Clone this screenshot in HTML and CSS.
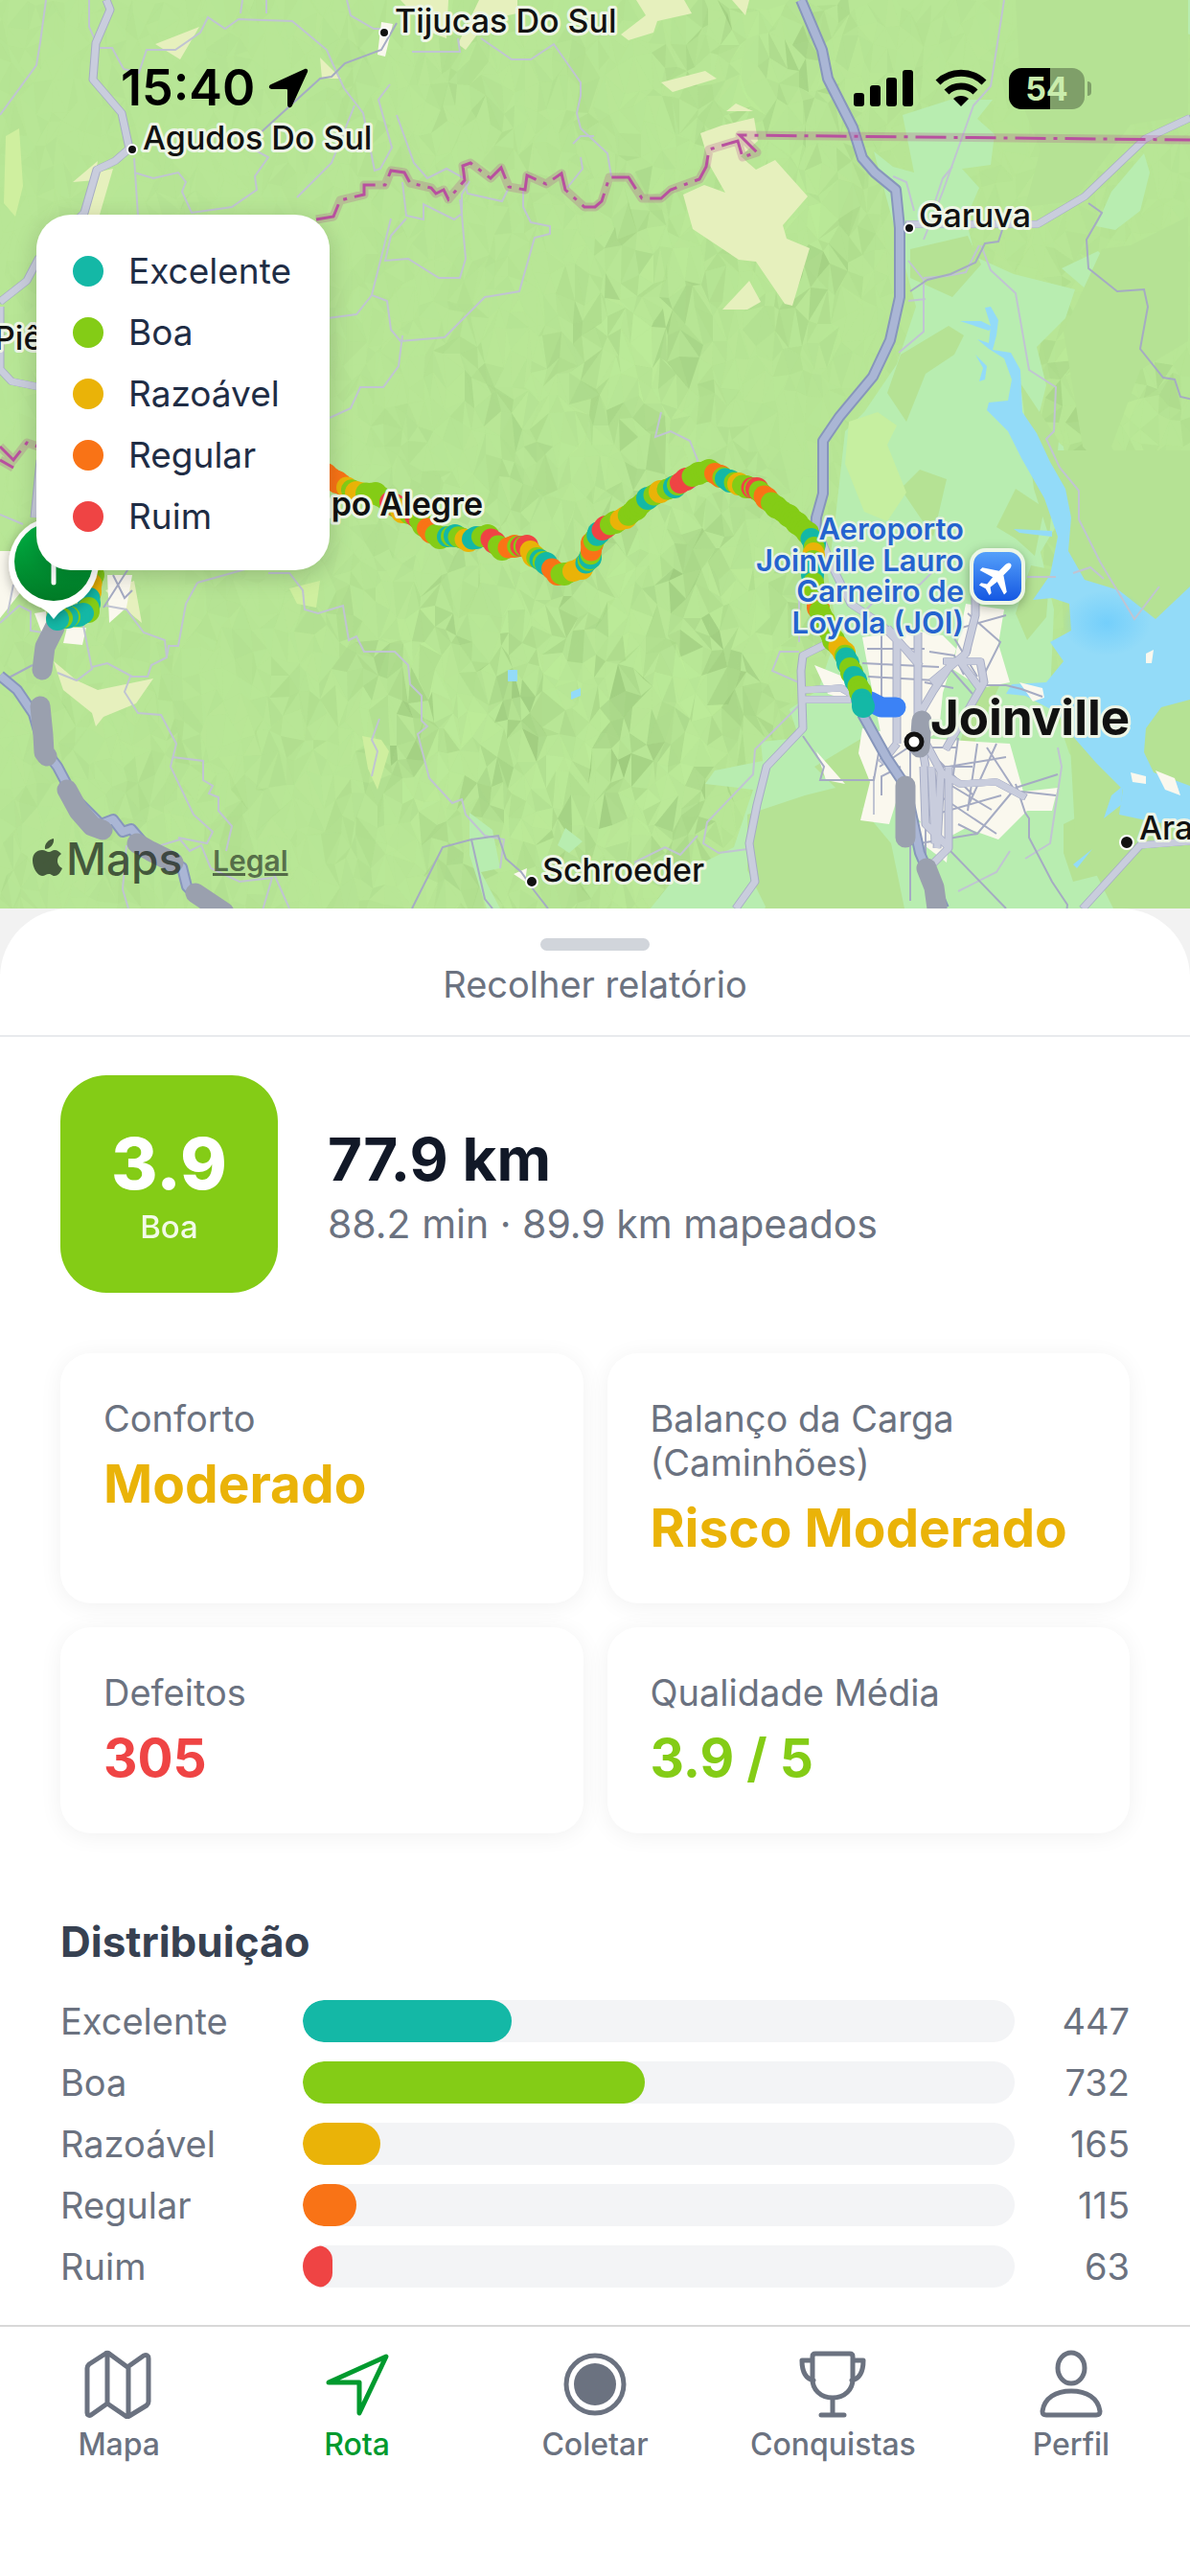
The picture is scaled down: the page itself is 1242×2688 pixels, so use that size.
FILE: index.html
```html
<!DOCTYPE html>
<html lang="pt-BR">
<head>
  <meta charset="UTF-8">
  <meta name="viewport" content="width=device-width, initial-scale=1.0">
  <title>Rota</title>
  <link rel="stylesheet" href="styles.css">
</head>
<body>

  <section class="map">
    <svg class="map-canvas" viewBox="0 0 1242 948" preserveAspectRatio="xMidYMin slice" role="img" aria-label="Mapa da rota">
      <defs>
        <linearGradient id="pinFill" x1="0" y1="0" x2="0" y2="1">
          <stop offset="0" stop-color="#00b445"/>
          <stop offset="1" stop-color="#007a26"/>
        </linearGradient>
        <linearGradient id="airFill" x1="0" y1="0" x2="0" y2="1">
          <stop offset="0" stop-color="#55a0fa"/>
          <stop offset="1" stop-color="#1558e2"/>
        </linearGradient>
        <radialGradient id="bay">
          <stop offset="0" stop-color="#74cffb"/>
          <stop offset="1" stop-color="#74cffb" stop-opacity="0"/>
        </radialGradient>
        <filter id="shadow" x="-30%" y="-30%" width="160%" height="160%">
          <feDropShadow dx="0" dy="3" stdDeviation="6" flood-opacity=".3"/>
        </filter>
      </defs>

      <rect width="1242" height="948" fill="#b8e696"/>
      <g id="relief"></g>

      <!-- Planície -->
      <g fill="#b8edb0">
        <path d="M912 158l20 16 22 6-12-60 50-16h44l-16 20 18 16-4 32-30 4 18 20-14 32 10 40 40 18 64 16-10 30-30 30 10 40-10 40 28 24 6 60-30 50 14 60-4 90 20 60 50 60-10 60 40 22v120H846l-6-30 20-60-14-30-46 16-60 120h-40l-30-20 10-60-14-20 40-50 60-30 20-60-50-6 10-14 50-10-2-20 40-4-10-30 30-20 20-60-10-60 8-60 10-90 20-20 34-50 20-60z"/>
        <path d="M1184 30l10-30h48v36l-30-8zM1062 0l34 2 2 24-20-10zM1160 200l34-40 6 20-10 40-26 20-20-4zM1108 280l38-18 20 20-30 22zM1180 360l20-34 40-10-4 24-40 26zM490 848l24 18 8 40-20 4 20 38h-14l-18-56zM590 864l18 14-14 12-12-8z"/>
      </g>
      <g fill="#b5e294">
        <path d="M950 260l60-14 14 30-30 34-44-20zM1060 0h180v120l-60 10-60 80-50 6 16-60-20-50zM1150 260l30-4 60-30v130l-50 30-30 80 30 60-60-60-20-120zM940 370l50-30 16 10-10 20-30 20-20 50-20-30zM1065 400l40 60-10 100-16-50zM1040 550l20-40 30 20-10 50-20-18zM1060 640l16-50 20 4-4 50-20 24zM940 510l20-20 28 10-14 60z"/>
        <path d="M780 850l60-20 40-10 50 60 14 68H800l-20-40zM1110 860l40-20 20 30-10 40-40 10-10-30zM1050 700l-30 20-20 60 10 10zM850 800l50-30 20 30-10 50-30-20z"/>
      </g>
      <path d="M886 440l30-10 20 14-10 20 20 50-20 30-24-10-20-50z" fill="#c6efa0"/>
      <path d="M1100 470h142v478h-80l-40-80z" fill="#b5e294"/>

      <!-- Água -->
      <path d="M1028 321L1034 320 1042 334 1040 350 1036 365 1055 368 1065 386 1067 430 1082 452 1096 482 1112 510 1118 540 1115 575 1132 605 1168 616 1206 646 1242 612V730L1212 738 1196 760 1194 785 1204 806 1242 820V864L1196 856 1168 850 1172 824 1144 796 1116 764 1104 744 1070 726 1050 724 1056 714 1092 712 1110 690 1096 670 1118 658 1116 630 1098 624 1078 626 1096 600 1104 560 1090 520 1066 478 1052 450 1030 428 1032 420 1052 418 1056 396 1048 374 1032 364 1020 354 1032 358 1034 340z" fill="#93dbf8"/>
      <ellipse cx="1155" cy="650" rx="46" ry="34" fill="url(#bay)"/>
      <path d="M1002 335h22l12 6-4 4zM1018 370l12 12-2 14-6 2 4-14zM1058 552l40 2v6l-34-4zM1172 820l-12 10-8 24 18-14zM1140 886l-20 16 4 4zM530 699h10v12h-10zM596 722l10-4v8l-10 4z" fill="#93dbf8"/>
      <path d="M1196 682l8-4-2 14h-6zM1180 806l16 4v8l-14-2zM1206 804l20 8 6 18-16-6z" fill="#faf8ee"/>

      <!-- Campos e áreas urbanas -->
      <g fill="#e6f0bd">
        <path d="M731 139l22-8 34-8 4 24-18 16 16 14 20-10 34 38-26 30 4 14 24 10-18 60-8-2-30-44-18-2-48-32-10-36 22-10 22 8-16-28z"/>
        <path d="M754 323l28-30 12 22-14 8zM690 86l46-12 12 8-46 14zM758 116l10-8 18 8zM664 0h50l8 14-36 8-4 12-26 8-8-6 26-20zM764 0h18l-4 16zM162 46l46-18-20 34zM334 60l22 22h-20zM418 0h50l-2 40-16-6zM500 0h40v14l-30 6-24 32-8-6zM76 190l26-22-2 12 18-4-14 48h-12l8-36zM110 616l30-10 8 44-24-20zM56 690l24 20 22 10 58-12-18 26-34 14-8 10-4-14-30-24z"/>
      </g>
      <path d="M6 142l14-8 4 60-8 32-12-14zM378 768l20 4 8 12-12 40-10-22zM302 614l32-8-4 28-20-4z" fill="#cfef9f"/>
      <g fill="#faf8ee">
        <path d="M900 665l50-8 34 6 14 14-14 46-4 40-30 20-30-14-10-50zM1008 630l40 6-6 36 12 40-30 6-30-20zM900 760l60 10 60 4 34 2 14 50 36-4-6 24-26 0-30 30-34-12-30 16-40-52-10 32-30-4 10-40-12-30zM850 694l40 16 4 24-30-10zM852 784l30 34-20-4zM1064 712l24 6 2 10-12 4zM936 860l56-4-4 44z"/>
        <path d="M112 600l26 0-6 34-18 16zM70 655l20 0-4 18-20-2zM398 23l12 2-8 34-8-2zM536 912l14-6-2 14zM0 575l16 0 8 40-24 30zM36 640l12-2 0 34z"/>
      </g>

      <!-- Estradas menores -->
      <g class="road-thin">
        <path d="M48 0l-6 44-4 24-38 52M93 0v28l10 22 14 0 12 22 16 4 8-24 30 0 26-18 8-16 18 12 14-10 56 2 36 30 6 14 12 26 20 26 12 60 6-2 12-22-14-50 12-16M253 0l-2 14M278 0v14M362 0l4 16 24 14h14M140 165l4 60M140 180l20 6 26-6 8 10-4 10 10 22 42-6 26-18-2-14 14-20-26-14M370 110l-24 60-36 36M414 120l18 50 14 16 20-10 18 10 4 16 36 8 6-12M420 190l4 35 18 4 0-16 32 16 8-6 0-20 8-14M424 228l-16 18-6 26 24-2 32 20h22l6-20-4-46-2-16M546 196l0 20 8 16 20 4v8l-16 4-16 56-36 6-42 42-46 4-10-12-4-30-16-6 20-80M420 350l-4 32-16 22-24 0-10 22-22 10M388 308l-16 20-30 4"/>
        <path d="M502 40l32 22h20l24-16 28 40 0 14-4 18 4 16 28 26 4 24M598 150l8-8 14 0M606 164l2 12-16 20M430 54l50 0-2-14M1048 0l-14 90-18 20-32 90-20 50M932 184l14 6 8 30M994 174l-10 12-8 24M948 272l16 20v54l-26 22M948 314l18-2M1022 256l-14 28-20 4-24 2M1024 256l10 26 26 24 14 80 28 18-2 46-8 8 14 30 20 24 0 30 22 44 36 60 26-34M690 430l-6 26 16-6 20 10 8 20-4 30M1120 598l18-6 14 12"/>
        <path d="M206 608l50-14 30-10M206 608l-12 22-8 44h-10l-2 12-16 8-4 12h-18l-6 16 14 22 24 2 16 30-6 24 24 50 20 18-6 12-30-6M180 790l32 4 0 20 10 6-4 8 10 4 0 14 14 16-6 26M110 632l22 4 18 24 22 8 2 18M60 702l20 8 16-12-10-50M96 696l16-4 26 14M280 598l22 0 14 18 2 20 14 4 26-8 6 36 8-4 8 16h32l14 14 2 20 12 12 0 26 6 6-10 8 12 46 24 26 10-4 4 16 20 22 20 4-4 30M132 882l-4 46 6 20M396 750l-8 22 6 12-6 26M168 882l20-6 10 12 12-6 10 24 30 14 34-4-10 34M286 912l16 36"/>
        <path d="M0 537l24 10M0 650l20-18 12 6 0 20 12 2M8 640l6-30M834 670v-60M834 680l-20 0-8 20 32 14M838 732l-50 50-2 26-48 50-4 22 16 10 30-4M728 872l-18 20-16-8-32 16M1072 602h30M900 640l20-20 40-10 30-30M1104 780l4 20-12 80-26 16M912 850l0-40M1000 930l40-20 14-22"/>
      </g>
      <g class="road-mid">
        <path d="M414 24l-16 28-38 14-14 14-12 2-66 60M1046 240l-4 12-14 2-10 20-26 12-24 6-18 12M1136 212l14 10-16 28 2 30 30 24 28-2 4 18-8 44 24 30 12 2 6 18 18 4M430 948l32-64 30-8 14 62 8 10M492 876l28-4 8 24 16 14 14 20 14 18M108 634l32-50M0 712l34-18M118 600l12 24 8-8M838 768l22 32-4 14h56l6-34M1060 818l10 30 4 6 0 20 24 46 16 24-2 20M1030 715l20 0 16 4 22 8M990 886l60 62"/>
        <path d="M905 677l60 0M900 692l80 4M906 706l70 4M920 660v70M936 662v60M960 690v70M970 680l26 4 10 20M990 656l30 50M1010 640l34 30-20 40M1018 632l-6 50M1000 656l50-14M985 690l30 34M965 712l30 6M918 800l30-20 50 0M966 780l50 50M1000 770l-12 90M975 800l40 0M1020 776l-10 70M1040 776l-30 66M1050 790l-60 10M980 830l60 40M975 850l70-20M960 880l60-10 40-48M1000 860l20 10M966 900v-100M1060 822l44-14M1066 826l36 4M940 800l-20 10 0 20M950 780v160M1030 780l30 46M985 815l50 30"/>
      </g>

      <!-- Rodovias -->
      <g class="road-major">
        <path d="M111 0l4 10-15 35-3 38 30 35 8 37-15 13-19 9-13 45-48 48-12 23-28 22M0 320v65l12 13 50 10M36 540l6-60M946 234h137l49-29 63-60 47-22M866 670l-28 14-2 16 2 60-38 40-10 40-8 40 6 40-20 28M1242 878l-52 4-60 66"/>
        <path d="M838 720l40-2 14 8M838 730h50M936 656v120M958 660l0 90 8 50M958 690l-40-40-30-20-20-40-12-30M972 712l36-30 10-40 0-50M985 690l16 0 22 0 4 22-40 70M966 775l16 30-4 80M982 806l20 12 38-2 30 16M964 800l2 60 24 24M972 800l4 80M936 776l-16 20M960 745l14-24 20-30M990 800l0 85-20 20M926 655l34 40M1002 690l22 30"/>
      </g>
      <g class="road-trunk-case">
        <path d="M836 0l22 52 6 30 26 51 10 32 13 15 22 18 4 40 0 72-10 45-18 38-35 42-17 25 0 55-7 25-3 60M900 745l25 45 20 30 15 70 15 35 10 23M0 705l18 15 17 25 10 35 15 20 8 15 7 15 30 30 13-5 10 13 9-3 13 15 40 25 5 20 20 20"/>
      </g>
      <g class="road-trunk">
        <path d="M836 0l22 52 6 30 26 51 10 32 13 15 22 18 4 40 0 72-10 45-18 38-35 42-17 25 0 55-7 25-3 60M900 745l25 45 20 30 15 70 15 35 10 23M0 705l18 15 17 25 10 35 15 20 8 15 7 15 30 30 13-5 10 13 9-3 13 15 40 25 5 20 20 20"/>
      </g>

      <!-- Divisa estadual -->
      <path class="border-glow" d="M330 229l18-3 7-17 25-6v-10h22l6-15 14 2 6 11 22 5 5 6 8-4 5 10 17-20-2-15 8-3 21 16 11-11 8 20 17 3 2-15 20 9 16-11 4 17 20 18h11l7-6 8-25h20l14 22h20l10-9 30-11 7-13 3-18 30-9 5 17 15-5-18-18 470 5M0 466l14 14 14-18 12 4M0 480l14 8"/>
      <path class="border-line" d="M330 229l18-3 7-17 25-6v-10h22l6-15 14 2 6 11 22 5 5 6 8-4 5 10 17-20-2-15 8-3 21 16 11-11 8 20 17 3 2-15 20 9 16-11 4 17 20 18h11l7-6 8-25h20l14 22h20l10-9 30-11 7-13 3-18 30-9 5 17 15-5-18-18 470 5M0 466l14 14 14-18 12 4M0 480l14 8"/>

      <!-- Trechos sem dados -->
      <path class="no-data" d="M57 655l-10 20-3 24M42 737l3 30 1 18 3 4M70 824l12 22 14 16 11 4M143 880l14 8 24 12M204 932l30 20M962 752l-2 28M945 820v54M967 906l8 20 3 22"/>
      <path d="M908 732l12 6h15" class="pending"/>

      <g id="route"></g>

      <!-- Cidades -->
      <g class="town-dot">
        <circle cx="401" cy="34" r="5"/>
        <circle cx="138" cy="156" r="5"/>
        <circle cx="949" cy="238" r="5"/>
        <circle cx="555" cy="920" r="6"/>
        <circle cx="1176" cy="879" r="7"/>
      </g>
      <circle cx="954" cy="774" r="8" fill="#fff" stroke="#111" stroke-width="5"/>
      <g class="town">
        <text x="412" y="34">Tijucas Do Sul</text>
        <text x="149" y="156">Agudos Do Sul</text>
        <text x="959" y="237">Garuva</text>
        <text x="-6" y="365">Piên</text>
        <text x="566" y="920">Schroeder</text>
        <text x="1189" y="876">Araquari</text>
        <text class="town-bold" x="504" y="538" text-anchor="end">Campo Alegre</text>
        <text class="city" x="971" y="767">Joinville</text>
      </g>
      <g class="airport" text-anchor="end">
        <text x="1006" y="563">Aeroporto</text>
        <text x="1006" y="596">Joinville Lauro</text>
        <text x="1006" y="628">Carneiro de</text>
        <text x="1006" y="661">Loyola (JOI)</text>
      </g>
      <g filter="url(#shadow)">
        <rect x="1012" y="572" width="58" height="59" rx="17" fill="#edf6e6"/>
      </g>
      <rect x="1016" y="576" width="50" height="51" rx="13" fill="url(#airFill)"/>
      <path transform="translate(1041 602) rotate(45) scale(1.5)" fill="#fff" d="M0-13c1.500 0 2.200 1.800 2.200 3.800v5.400L12 2.800v2.600L2.200 2.400 1.600 8.600 5 11v2L0 11.600-5 13v-2l3.400-2.400-.6-6.200L-12 5.400V2.800l9.800-6.600v-5.400C-2.200-11.200-1.500-13 0-13z"/>

      <!-- Início da rota -->
      <g filter="url(#shadow)">
        <path d="M56 540a48 48 0 0 1 18 92c-8 3-12 6-18 14-6-8-10-11-18-14a48 48 0 0 1 18-92z" fill="#fff"/>
      </g>
      <circle cx="56" cy="586" r="41" fill="url(#pinFill)"/>
      <path d="M56 570v38" stroke="#fff" stroke-width="5" stroke-linecap="round"/>

      <g class="credit">
        <path d="M56 875c1 6-4 11-9 11-1-6 4-10 9-11zM57 887c3 0 5 2 7 4-6 4-5 12 1 15-2 5-5 8-8 8s-3-2-6-2-4 2-7 2c-5 0-10-9-10-16s4-11 10-11c3 0 5 2 7 2s4-2 6-2z"/>
        <text class="credit-name" x="69" y="913">Maps</text>
        <text class="credit-legal" x="222" y="909">Legal</text>
      </g>
    </svg>

    <div class="status-bar">
      <div class="status-left">
        <span class="clock">15:40</span>
        <svg width="42" height="42" viewBox="0 0 42 42" aria-hidden="true"><path d="M38 1c2-1 4 1 3 3L25 39c-1 3-5 3-5-1V23c0-1-1-1-1-1H4c-4 0-4-4-1-5z"/></svg>
      </div>
      <div class="status-right">
        <svg width="62" height="40" viewBox="0 0 62 40" aria-hidden="true">
          <rect y="25" width="11" height="14" rx="3"/>
          <rect x="17" y="17" width="11" height="22" rx="3"/>
          <rect x="34" y="9" width="11" height="30" rx="3"/>
          <rect x="51" y="1" width="11" height="38" rx="3"/>
        </svg>
        <svg width="54" height="40" viewBox="0 0 54 40" aria-hidden="true">
          <path d="M27 39l-8-8c4-4 12-4 16 0z"/>
          <path d="M12 24c8-8 22-8 30 0M3 14c13-13 35-13 48 0" fill="none" stroke="#000" stroke-width="7"/>
        </svg>
        <div class="battery"><span>54</span></div>
      </div>
    </div>

    <ul class="legend">
      <li><i class="dot excelente"></i>Excelente</li>
      <li><i class="dot boa"></i>Boa</li>
      <li><i class="dot razoavel"></i>Razoável</li>
      <li><i class="dot regular"></i>Regular</li>
      <li><i class="dot ruim"></i>Ruim</li>
    </ul>
  </section>

  <main class="sheet">
    <button class="sheet-toggle" type="button">
      <span class="handle"></span>
      Recolher relatório
    </button>

    <div class="report">
      <div class="summary">
        <div class="score">
          <strong>3.9</strong>
          <span>Boa</span>
        </div>
        <div class="trip">
          <h1>77.9 km</h1>
          <p>88.2 min · 89.9 km mapeados</p>
        </div>
      </div>

      <div class="cards">
        <div class="card">
          <p>Conforto</p>
          <strong class="text-razoavel">Moderado</strong>
        </div>
        <div class="card">
          <p>Balanço da Carga (Caminhões)</p>
          <strong class="text-razoavel">Risco Moderado</strong>
        </div>
        <div class="card">
          <p>Defeitos</p>
          <strong class="text-ruim">305</strong>
        </div>
        <div class="card">
          <p>Qualidade Média</p>
          <strong class="text-boa">3.9 / 5</strong>
        </div>
      </div>

      <h2>Distribuição</h2>
      <div class="distribution">
        <div class="row"><span>Excelente</span><div class="track"><div class="fill excelente" style="width: 29.37%"></div></div><b>447</b></div>
        <div class="row"><span>Boa</span><div class="track"><div class="fill boa" style="width: 48.09%"></div></div><b>732</b></div>
        <div class="row"><span>Razoável</span><div class="track"><div class="fill razoavel" style="width: 10.84%"></div></div><b>165</b></div>
        <div class="row"><span>Regular</span><div class="track"><div class="fill regular" style="width: 7.56%"></div></div><b>115</b></div>
        <div class="row"><span>Ruim</span><div class="track"><div class="fill ruim" style="width: 4.14%"></div></div><b>63</b></div>
      </div>
    </div>
  </main>

  <nav class="tabbar">
    <a href="#mapa">
      <svg viewBox="0 0 72 72" aria-hidden="true"><path d="M3 19c0-2 1-3 2-4L22 4c1-1 3-1 4 0l19 14 17-12c3-1 5 0 5 3v45c0 2-1 3-2 4L47 69c-1 1-3 1-4 0L24 56 7 68c-2 1-4 0-4-2zM24 4v52M46 18v51"/></svg>
      Mapa
    </a>
    <a href="#rota" class="active">
      <svg viewBox="0 0 72 72" aria-hidden="true"><path d="M66 7L38 66V34H6z"/></svg>
      Rota
    </a>
    <a href="#coletar">
      <svg viewBox="0 0 72 72" aria-hidden="true"><circle cx="36" cy="36" r="30"/><circle cx="36" cy="36" r="22" class="solid"/></svg>
      Coletar
    </a>
    <a href="#conquistas">
      <svg viewBox="0 0 72 72" aria-hidden="true"><path d="M18 4h36c2 0 3 1 3 3v24c0 10-8 19-21 19S15 41 15 31V7c0-2 1-3 3-3zM15 11H4c0 12 4 19 12 21M57 11h11c0 12-4 19-12 21M36 50v18M24 68h24"/></svg>
      Conquistas
    </a>
    <a href="#perfil">
      <svg viewBox="0 0 72 72" aria-hidden="true"><ellipse cx="36" cy="19" rx="14" ry="16"/><path d="M10 68c-3 0-4-1-4-4 2-14 14-21 30-21s28 7 30 21c0 3-1 4-4 4z"/></svg>
      Perfil
    </a>
  </nav>

  <script src="map.js"></script>
</body>
</html>
```

FILE: styles.css
```css
* {
  box-sizing: border-box;
}

body {
  margin: 0;
  height: 100vh;
  display: flex;
  flex-direction: column;
  font-family: Inter, "Liberation Sans", sans-serif;
  background-color: #f2f2f2;
  color: #6b7280;
}

h1, h2, p, ul {
  margin: 0;
  padding: 0;
}

/* Mapa */
.map {
  position: relative;
  flex: none;
  height: 948px;
  overflow: hidden;
}

.map-canvas {
  display: block;
  width: 100%;
  height: 100%;
}

.road-thin,
.road-mid {
  fill: none;
  stroke: #c0c4d2;
  stroke-width: 2;
}

.road-mid {
  stroke: #a5abc3;
}

.road-major {
  fill: none;
  stroke: #c9cddd;
  stroke-width: 7;
  stroke-linejoin: round;
  filter: drop-shadow(1px 0 0 #a5abc4) drop-shadow(-1px 0 0 #a5abc4);
}

.road-trunk-case,
.road-trunk {
  fill: none;
  stroke: #8796bb;
  stroke-width: 12;
  stroke-linejoin: round;
}

.road-trunk {
  stroke: #aab6d5;
  stroke-width: 8;
}

.border-glow {
  fill: none;
  stroke: #b0508f;
  stroke-opacity: 0.25;
  stroke-width: 9;
  stroke-linejoin: round;
}

.border-line {
  fill: none;
  stroke: #b8509f;
  stroke-width: 3;
  stroke-dasharray: 32 8 4 8;
}

.no-data,
.pending {
  fill: none;
  stroke: #9aa0ae;
  stroke-width: 21;
  stroke-linecap: round;
  stroke-linejoin: round;
}

.pending {
  stroke: #3b82f6;
}

.town-dot {
  fill: #111;
  stroke: #fff;
  stroke-width: 2;
}

.town {
  font-size: 34px;
  font-weight: 500;
  fill: #111;
  stroke: #eef6e6;
  stroke-width: 6px;
  stroke-linejoin: round;
  paint-order: stroke;
}

.town-bold {
  font-weight: 600;
}

.city {
  font-size: 51px;
  font-weight: 700;
}

.airport {
  font-size: 31px;
  font-weight: 600;
  fill: #2463cf;
  stroke: #e6f3e4;
  stroke-width: 5px;
  stroke-linejoin: round;
  paint-order: stroke;
}

.credit {
  fill: #1e2a1e;
  fill-opacity: 0.75;
}

.credit-name {
  font-size: 46px;
  font-weight: 500;
}

.credit-legal {
  font-size: 30px;
  font-weight: 600;
  fill-opacity: 0.65;
  text-decoration: underline;
}

/* Barra de status sobre o mapa */
.status-bar {
  position: absolute;
  top: 60px;
  left: 0;
  right: 0;
  padding: 0 104px 0 126px;
  display: flex;
  justify-content: space-between;
  align-items: center;
  color: #000;
}

.status-left,
.status-right {
  display: flex;
  align-items: center;
  gap: 14px;
}

.status-right {
  gap: 23px;
}

.clock {
  font-size: 52px;
  font-weight: 600;
  line-height: 64px;
}

.battery {
  position: relative;
  width: 79px;
  height: 43px;
  border-radius: 13px;
  background: linear-gradient(90deg, #000 54%, #7f9f69 54%);
  color: #c9ecac;
  font-size: 34px;
  font-weight: 700;
  line-height: 43px;
  text-align: center;
  margin-right: 6px;
}

.battery::after {
  content: "";
  position: absolute;
  right: -7px;
  top: 14px;
  width: 4px;
  height: 15px;
  border-radius: 0 4px 4px 0;
  background-color: #7f9f69;
}

.legend {
  position: absolute;
  top: 224px;
  left: 38px;
  padding: 36px 40px 34px 38px;
  border-radius: 36px;
  background-color: #fff;
  box-shadow: 0 6px 24px rgba(0, 0, 0, 0.18);
  list-style: none;
  font-size: 37px;
  line-height: 45px;
  color: #1f2d45;
}

.legend li {
  display: flex;
  align-items: center;
  gap: 26px;
}

.legend li + li {
  margin-top: 19px;
}

.dot {
  width: 32px;
  height: 32px;
  border-radius: 50%;
}

.excelente { background-color: #14b8a6; }
.boa { background-color: #84cc16; }
.razoavel { background-color: #eab308; }
.regular { background-color: #f97316; }
.ruim { background-color: #ef4444; }

.text-boa { color: #84cc16; }
.text-razoavel { color: #eab308; }
.text-ruim { color: #ef4444; }

/* Relatório */
.sheet {
  flex: 1;
  min-height: 0;
  overflow: hidden;
  border-radius: 72px 72px 0 0;
  background-color: #fff;
}

.sheet-toggle {
  display: flex;
  flex-direction: column;
  align-items: center;
  gap: 12px;
  width: 100%;
  padding: 31px 0 30px;
  border: 0;
  border-bottom: 2px solid #e8eaed;
  background: none;
  font-family: inherit;
  font-size: 38px;
  line-height: 46px;
  color: #6b7280;
}

.handle {
  width: 114px;
  height: 13px;
  border-radius: 7px;
  background-color: #d1d5db;
}

.report {
  padding: 40px 63px;
}

.summary {
  display: flex;
  align-items: center;
  gap: 52px;
}

.score {
  display: flex;
  flex-direction: column;
  align-items: center;
  justify-content: center;
  width: 227px;
  height: 227px;
  border-radius: 48px;
  background-color: #84cc16;
  color: #fff;
}

.score strong {
  font-size: 74px;
  font-weight: 800;
  line-height: 88px;
}

.score span {
  font-size: 33px;
  font-weight: 500;
  line-height: 44px;
  opacity: 0.9;
}

.trip {
  padding-top: 6px;
}

.trip h1 {
  font-size: 62px;
  line-height: 76px;
  font-weight: 700;
  color: #111827;
}

.trip p {
  font-size: 41px;
  line-height: 58px;
}

.cards {
  display: grid;
  grid-template-columns: 1fr 1fr;
  gap: 25px;
  margin-top: 63px;
}

.card {
  padding: 45px;
  border-radius: 32px;
  background-color: #fff;
  box-shadow: 0 3px 24px rgba(0, 0, 0, 0.06);
}

.card p {
  font-size: 38px;
  line-height: 46px;
}

.card strong {
  display: block;
  margin-top: 12px;
  font-size: 55px;
  font-weight: 700;
  line-height: 67px;
}

.report h2 {
  margin-top: 86px;
  font-size: 44px;
  line-height: 54px;
  font-weight: 700;
  color: #374151;
}

.distribution {
  display: flex;
  flex-direction: column;
  gap: 18px;
  margin-top: 33px;
}

.row {
  display: flex;
  align-items: center;
  font-size: 38px;
  line-height: 46px;
}

.row span {
  width: 253px;
}

.row b {
  width: 120px;
  font-weight: 400;
  text-align: right;
}

.track {
  flex: 1;
  height: 44px;
  border-radius: 22px;
  background-color: #f3f4f6;
  overflow: hidden;
}

.fill {
  height: 100%;
  border-radius: 22px;
}

/* Navegação inferior */
.tabbar {
  flex: none;
  display: flex;
  height: 262px;
  padding-top: 24px;
  border-top: 2px solid #d8d8d8;
  background-color: #fff;
}

.tabbar a {
  flex: 1 1 0;
  display: flex;
  flex-direction: column;
  align-items: center;
  gap: 7px;
  color: #6b7280;
  font-size: 32px;
  font-weight: 500;
  line-height: 40px;
  text-decoration: none;
}

.tabbar svg {
  width: 72px;
  height: 72px;
  fill: none;
  stroke: currentColor;
  stroke-width: 5;
  stroke-linecap: round;
  stroke-linejoin: round;
}

.tabbar .solid {
  fill: currentColor;
  stroke: none;
}

.tabbar .active {
  color: #009a2e;
}
```

FILE: map.js
```js
const SVG_NS = "http://www.w3.org/2000/svg";
const COLORS = { e: "#14b8a6", b: "#84cc16", z: "#eab308", g: "#f97316", r: "#ef4444" };

let seed = 7;
function random() {
  seed = (seed * 16807) % 2147483647;
  return seed / 2147483647;
}

function add(parent, tag, attrs) {
  const el = document.createElementNS(SVG_NS, tag);
  for (const key in attrs) el.setAttribute(key, attrs[key]);
  parent.appendChild(el);
}

// Serras: x, y, raio x, raio y, força
const hills = [
  [800, 60, 110, 110, 0.5],
  [670, 330, 70, 130, 0.6],
  [840, 260, 50, 80, 0.6],
  [720, 620, 110, 110, 0.6],
  [540, 780, 150, 160, 0.5],
  [430, 800, 30, 110, 0.5],
  [690, 780, 90, 130, 0.5],
  [540, 420, 120, 110, 0.3],
  [490, 90, 120, 90, 0.2],
  [1150, 400, 90, 130, 0.4],
  [150, 820, 200, 120, 0.15],
  [450, 660, 140, 100, 0.3]
];

function strength(x, y) {
  let total = 0.08;
  hills.forEach(([hx, hy, rx, ry, s]) => {
    total += s * Math.exp(-((x - hx) ** 2 / rx ** 2 + (y - hy) ** 2 / ry ** 2));
  });
  return Math.min(total, 0.7);
}

// Malha irregular de facetas
const STEP_X = 13;
const STEP_Y = 22;
const relief = document.getElementById("relief");
const mesh = [];
for (let row = 0; row * STEP_Y < 1000; row++) {
  mesh.push([]);
  for (let col = 0; col * STEP_X < 1270; col++) {
    mesh[row].push([
      Math.round((col - 0.5 + random()) * STEP_X),
      Math.round((row - 0.5 + random()) * STEP_Y)
    ]);
  }
}

function facet(a, b, c) {
  const force = strength(a[0], a[1]);
  // ondas largas formam as encostas, o resto é variação local
  const slope = Math.sin(a[0] / 19 + Math.sin(a[1] / 43) * 2);
  const shade = slope * 0.3 + random() - 0.5;
  add(relief, "polygon", {
    points: [a, b, c].join(" "),
    fill: shade > 0 ? "#8ab66c" : "#c0f09c",
    opacity: (Math.abs(shade) * force).toFixed(2)
  });
}

for (let r = 0; r < mesh.length - 1; r++) {
  for (let c = 0; c < mesh[r].length - 1; c++) {
    const a = mesh[r][c];
    const b = mesh[r][c + 1];
    const d = mesh[r + 1][c];
    const e = mesh[r + 1][c + 1];
    if (random() < 0.5) {
      facet(a, b, d);
      facet(b, e, d);
    } else {
      facet(a, b, e);
      facet(a, e, d);
    }
  }
}

// Pontos coletados: x, y, qualidade
const samples = [
  [[97, 600, "b"], [94, 618, "z"], [93, 630, "e"], [92, 638, "b"], [82, 642, "e"], [70, 644, "e"], [60, 646, "e"]],
  [[340, 495, "g"], [352, 503, "g"], [372, 514, "z"], [392, 515, "b"], [412, 527, "r"], [420, 534, "z"],
   [434, 538, "r"], [442, 548, "b"], [450, 555, "g"], [459, 561, "b"], [475, 559, "e"], [489, 564, "z"],
   [497, 561, "e"], [509, 559, "b"], [516, 566, "r"], [524, 573, "b"], [537, 570, "g"], [550, 570, "r"],
   [557, 580, "z"], [570, 588, "e"], [582, 599, "g"], [589, 599, "b"], [607, 593, "z"], [616, 582, "e"],
   [618, 567, "g"], [625, 556, "e"], [632, 550, "r"], [642, 545, "b"], [653, 540, "z"], [664, 531, "b"],
   [676, 520, "e"], [689, 513, "z"], [704, 508, "e"], [716, 500, "r"], [729, 494, "b"], [740, 491, "b"],
   [752, 497, "g"], [762, 502, "e"], [771, 505, "z"], [779, 508, "b"], [790, 510, "r"], [800, 520, "g"],
   [810, 529, "b"], [823, 538, "b"], [832, 546, "b"], [843, 556, "b"], [850, 568, "e"], [849, 580, "z"],
   [848, 600, "e"], [850, 616, "b"], [854, 634, "g"], [860, 648, "b"], [870, 668, "b"], [881, 681, "z"],
   [885, 692, "e"], [889, 702, "b"], [893, 710, "e"], [898, 722, "b"], [901, 737, "e"]]
];

const route = document.getElementById("route");
samples.forEach(line => {
  for (let i = 0; i < line.length; i++) {
    const [x, y, quality] = line[i];
    if (i > 0) {
      const [px, py, before] = line[i - 1];
      for (let t = 0.25; t < 1; t += 0.25) {
        add(route, "circle", {
          cx: px + (x - px) * t,
          cy: py + (y - py) * t,
          r: 11,
          fill: COLORS[random() < 0.4 ? "b" : t < 0.5 ? before : quality]
        });
      }
    }
    add(route, "circle", { cx: x, cy: y, r: 12, fill: COLORS[quality] });
  }
});
```
